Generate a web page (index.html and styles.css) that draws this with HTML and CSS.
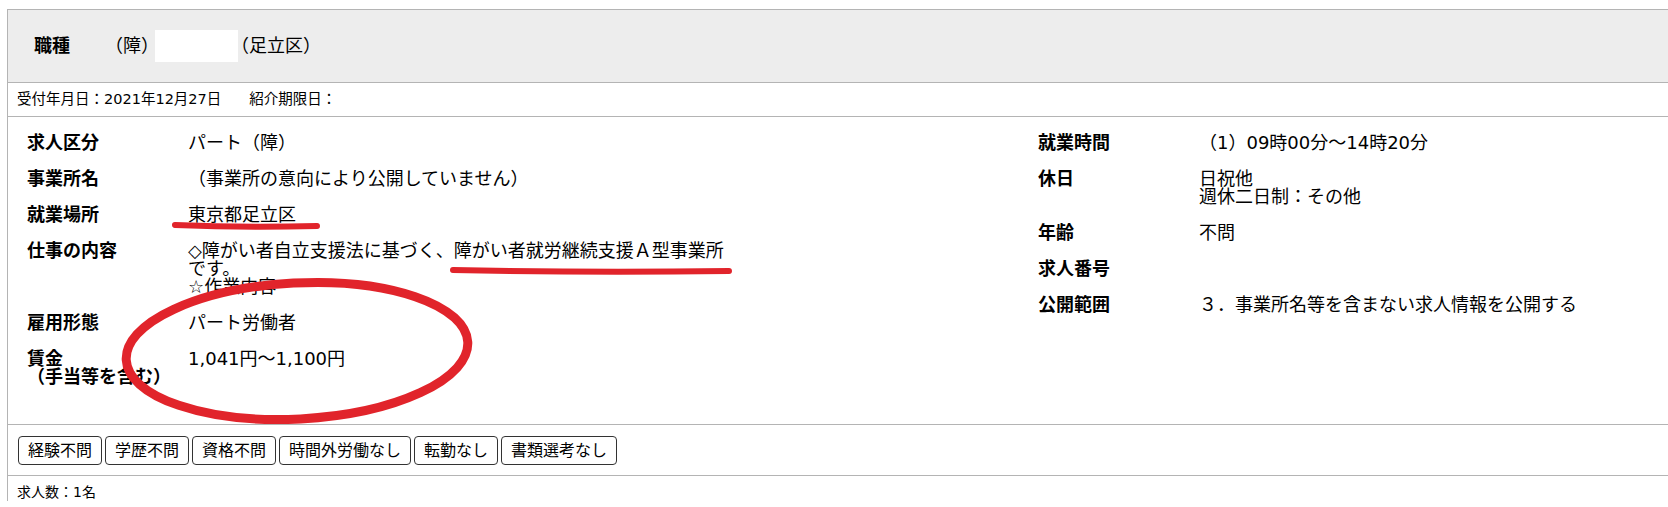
FILE: index.html
```html
<!DOCTYPE html>
<html lang="ja">
<head>
  <meta charset="UTF-8">
  <meta name="viewport" content="width=device-width, initial-scale=1.0">
  <title>求人情報</title>
  <link rel="stylesheet" href="styles.css">
</head>
<body>

  <div class="page">
    <div class="job">
      <div class="job-head">
        <span class="job-label">職種</span>
        <span class="job-title">（障）<span class="mask"></span>（足立区）</span>
      </div>

      <div class="job-dates">受付年月日：2021年12月27日<span class="limit">紹介期限日：</span></div>

      <div class="job-body">
        <dl class="info">
          <dt>求人区分</dt>
          <dd>パート（障）</dd>
          <dt>事業所名</dt>
          <dd>（事業所の意向により公開していません）</dd>
          <dt>就業場所</dt>
          <dd><span class="place">東京都足立区</span></dd>
          <dt>仕事の内容</dt>
          <dd>◇障がい者自立支援法に基づく、障がい者就労継続支援Ａ型事業所<br>です。<br>☆作業内容</dd>
          <dt>雇用形態</dt>
          <dd>パート労働者</dd>
          <dt>賃金<br>（手当等を含む）</dt>
          <dd>1,041円～1,100円</dd>
        </dl>

        <dl class="info">
          <dt>就業時間</dt>
          <dd>（1）09時00分～14時20分</dd>
          <dt>休日</dt>
          <dd>日祝他<br>週休二日制：その他</dd>
          <dt>年齢</dt>
          <dd>不問</dd>
          <dt>求人番号</dt>
          <dd></dd>
          <dt>公開範囲</dt>
          <dd>３．事業所名等を含まない求人情報を公開する</dd>
        </dl>
      </div>

      <div class="job-tags">
        <span class="tag">経験不問</span>
        <span class="tag">学歴不問</span>
        <span class="tag">資格不問</span>
        <span class="tag">時間外労働なし</span>
        <span class="tag">転勤なし</span>
        <span class="tag">書類選考なし</span>
      </div>

      <div class="job-count">求人数：1名</div>
    </div>

    <!-- red marker notes drawn over the page -->
    <svg class="marks" width="1668" height="507" viewBox="0 0 1668 507">
      <path d="M175 225 Q245 228 317 226" />
      <path d="M453 270 Q590 273 729 271" />
      <ellipse cx="297" cy="351" rx="171" ry="68" transform="rotate(-3 297 351)" />
    </svg>
  </div>

</body>
</html>
```

FILE: styles.css
```css
body {
  margin: 0;
  font-family: "DejaVu Sans", "Noto Sans CJK JP", sans-serif;
  color: #000;
  background-color: #fff;
}
.page {
  position: relative;
  padding: 9px 0 0 7px;
  height: 498px;
  overflow: hidden;
}
.job {
  border-top: 1px solid #b4b4b4;
  border-left: 1px solid #b4b4b4;
}
.job-head {
  display: flex;
  align-items: center;
  height: 72px;
  padding-left: 26px;
  background-color: #ededed;
  border-bottom: 1px solid #b4b4b4;
  font-size: 18px;
  line-height: 20px;
}
.job-label {
  font-weight: bold;
  width: 71px;
}
.job-title {
  display: flex;
  align-items: center;
}
.mask {
  display: inline-block;
  width: 83px;
  height: 32px;
  margin: 0 -7px 0 -4px;
  background-color: #fff;
}
.job-dates {
  height: 33px;
  padding-left: 9px;
  border-bottom: 1px solid #b4b4b4;
  font-size: 14.5px;
  line-height: 33px;
}
.limit {
  margin-left: 28px;
}
.job-body {
  display: grid;
  grid-template-columns: 1011px 1fr;
  padding: 17px 0 38px 19px;
  border-bottom: 1px solid #b4b4b4;
  font-size: 18px;
  line-height: 18px;
}
.info {
  display: grid;
  grid-template-columns: 161px 1fr;
  row-gap: 18px;
  align-content: start;
  margin: 0;
}
.info dt {
  font-weight: bold;
  white-space: nowrap;
}
.info dd {
  margin: 0;
  white-space: nowrap;
}
.place {
  text-decoration: underline;
  text-underline-offset: 3px;
}
.job-tags {
  display: flex;
  gap: 3px;
  padding: 11px 0 10px 10px;
  border-bottom: 1px solid #b4b4b4;
}
.tag {
  padding: 3px 9px;
  border: 1px solid #333;
  border-radius: 4px;
  font-size: 16px;
  line-height: 21px;
}
.job-count {
  padding: 7px 0 0 9px;
  font-size: 14px;
  line-height: 18px;
}
.marks {
  position: absolute;
  top: 0;
  left: 0;
  pointer-events: none;
}
.marks path,
.marks ellipse {
  fill: none;
  stroke: #e1242b;
  stroke-width: 6;
  stroke-linecap: round;
}
.marks ellipse {
  stroke-width: 9;
}
```
